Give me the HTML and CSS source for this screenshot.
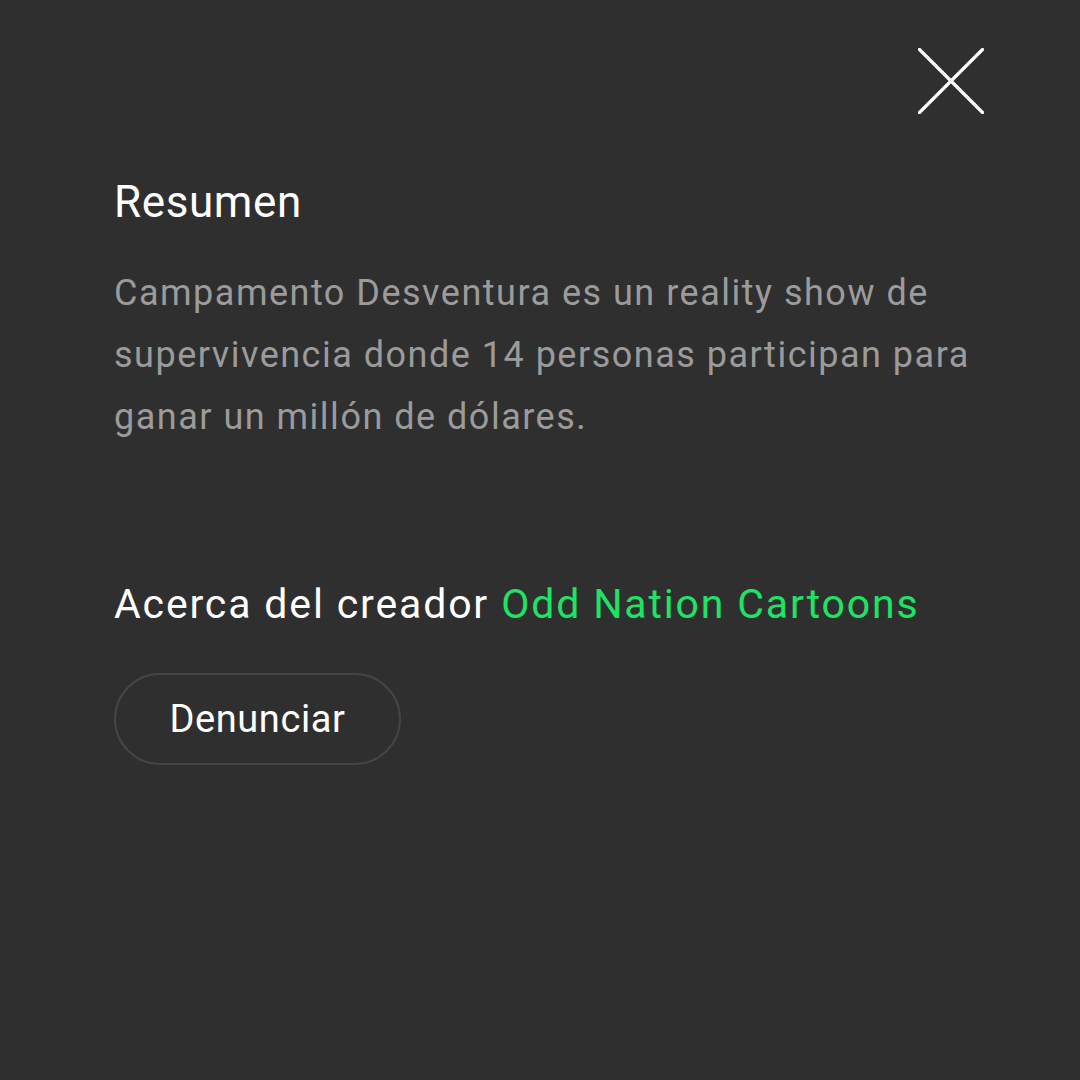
FILE: index.html
```html
<!DOCTYPE html>
<html lang="es">
<head>
    <meta charset="UTF-8">
    <meta name="viewport" content="width=device-width, initial-scale=1.0">
    <title>Resumen</title>
    <link rel="stylesheet" href="styles.css">
</head>
<body>
    <div class="sheet">
        <div class="top-bar">
            <button class="close" aria-label="Cerrar">
                <svg width="66" height="66" viewBox="0 0 66 66">
                    <path d="M1.5 1.5 L64.5 64.5 M64.5 1.5 L1.5 64.5" stroke="#fff" stroke-width="3.2" stroke-linecap="round" fill="none"/>
                </svg>
            </button>
        </div>

        <div class="content">
            <h2 class="title">Resumen</h2>
            <p class="summary">Campamento Desventura es un reality show de supervivencia donde 14 personas participan para ganar un millón de dólares.</p>

            <p class="creator">Acerca del creador <a href="#" class="creator-link">Odd Nation Cartoons</a></p>

            <button class="report">Denunciar</button>
        </div>
    </div>
</body>
</html>
```

FILE: styles.css
```css
html, body { margin: 0; padding: 0; }
body { background-color: #2f2f2f; font-family: Roboto, "Noto Sans", sans-serif; color: #fff; width: 1080px; height: 1080px; }
.sheet { display: flex; flex-direction: column; }
.top-bar { display: flex; justify-content: flex-end; padding: 48px 96px 0 0; }
.close { background: none; border: none; padding: 0; width: 66px; height: 66px; cursor: pointer; }
.close svg { display: block; }
.content { padding-left: 114px; padding-right: 90px; display: flex; flex-direction: column; align-items: flex-start; }
.title { font-size: 44px; font-weight: 400; line-height: 52px; letter-spacing: 0.6px; margin: 62px 0 0 0; }
.summary { font-size: 36px; line-height: 62px; letter-spacing: 1.5px; color: #9b9b9b; margin: 34px 0 0 0; }
.creator { font-size: 41px; line-height: 50px; letter-spacing: 1.85px; margin: 131px 0 0 0; }
.creator-link { color: #1ee364; text-decoration: none; }
.report { margin-top: 44px; width: 287px; height: 92px; border: 2px solid #454545; border-radius: 46px; background: transparent; color: #fff; font-family: Roboto, "Noto Sans", sans-serif; font-size: 38px; letter-spacing: 0.6px; cursor: pointer; }
```
